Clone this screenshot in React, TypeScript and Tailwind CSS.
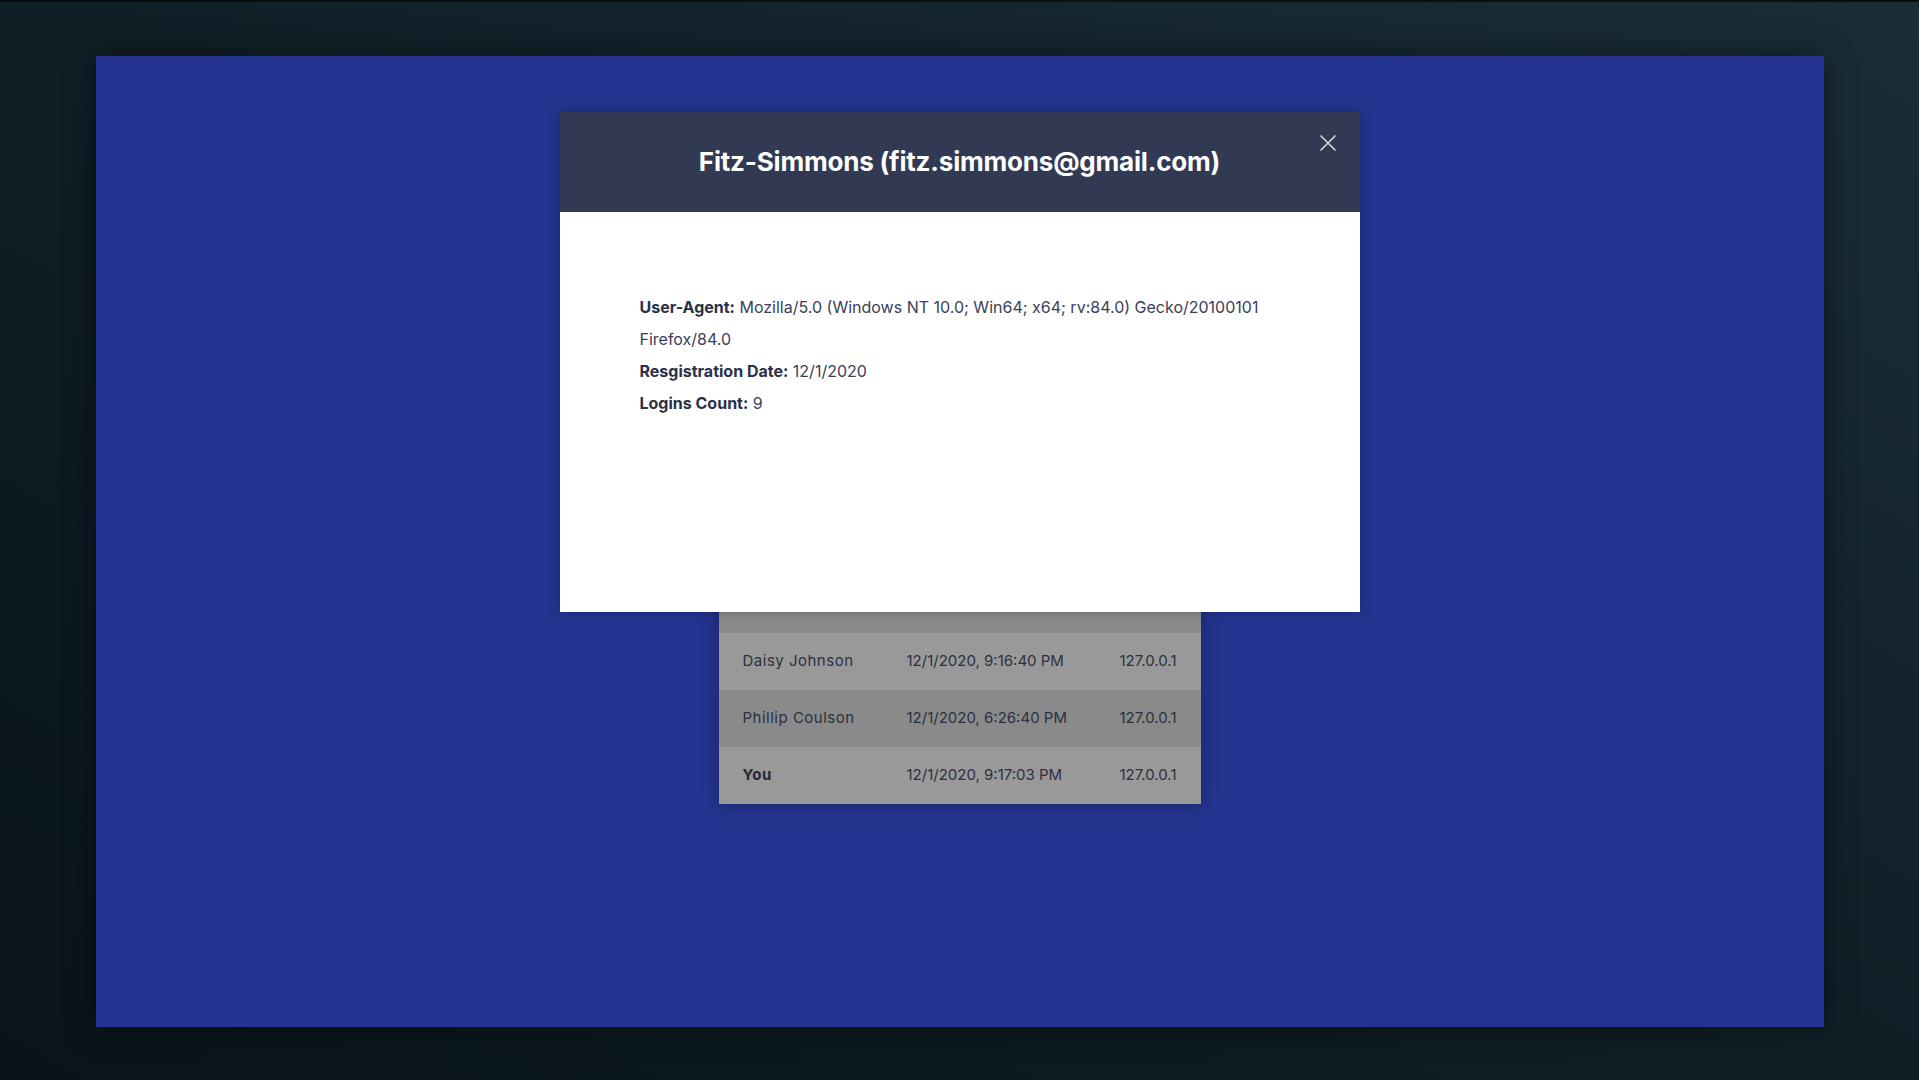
import React from "react";

const rows = [
  { name: "Leo Fitz", date: "12/1/2020, 8:02:11 PM", ip: "127.0.0.1", dark: false },
  { name: "Jemma Simmons", date: "12/1/2020, 7:45:20 PM", ip: "127.0.0.1", dark: true },
  { name: "Melinda May", date: "12/1/2020, 7:12:05 PM", ip: "127.0.0.1", dark: false },
  { name: "Fitz-Simmons", date: "12/1/2020, 9:14:52 PM", ip: "127.0.0.1", dark: true },
  { name: "Daisy Johnson", date: "12/1/2020, 9:16:40 PM", ip: "127.0.0.1", dark: false },
  { name: "Phillip Coulson", date: "12/1/2020, 6:26:40 PM", ip: "127.0.0.1", dark: true },
  { name: "You", date: "12/1/2020, 9:17:03 PM", ip: "127.0.0.1", dark: false, bold: true },
];

export default function App() {
  return (
    <div
      className="relative w-full h-[1080px] overflow-hidden flex items-center justify-center border-t-2 border-[#090e11] bg-[linear-gradient(30deg,#09141a_0%,#0f1d24_45%,#1a2e38_100%)]"
      style={{ fontFamily: "Inter, 'Noto Sans', sans-serif" }}
    >
      <div className="relative w-[1728px] h-[971px] bg-[#243490] shadow-[0_0_30px_rgba(0,0,0,0.45)] flex flex-col items-center">
        <div className="mt-[349px] w-[482px] flex flex-col shadow-[0_0_16px_rgba(0,0,0,0.3)]">
          {rows.map((r, i) => (
            <div
              key={i}
              className={`h-[57px] flex items-center px-6 text-[15px] text-[#2c3040] ${r.dark ? "bg-[#8a8a8a]" : "bg-[#999999]"}`}
            >
              <span className={`w-[164px] tracking-[0.5px] ${r.bold ? "font-bold text-[#1e2a36]" : ""}`}>{r.name}</span>
              <span className="flex-1">{r.date}</span>
              <span>{r.ip}</span>
            </div>
          ))}
        </div>

        <div className="absolute left-[464px] top-[56px] w-[800px] h-[500px] bg-white shadow-[0_0_12px_rgba(0,0,0,0.25)] flex flex-col">
          <div className="relative h-[100px] bg-[#313a52] flex items-center justify-center">
            <h2 className="text-white font-bold text-[26px] tracking-[-0.2px]">
              Fitz-Simmons (fitz.simmons@gmail.com)
            </h2>
            <button className="absolute right-[22px] top-[21px] w-[20px] h-[20px] flex items-center justify-center">
              <svg width="18" height="18" viewBox="0 0 18 18" fill="none" stroke="#d6d6d6" strokeWidth="1.6">
                <path d="M1.5 1.5 L16.5 16.5 M16.5 1.5 L1.5 16.5" />
              </svg>
            </button>
          </div>
          <div className="px-20 pt-[79px] text-[16px] leading-[32px] text-[#3a4058]">
            <p>
              <span className="font-bold text-[#2a3049]">User-Agent:</span>{" "}
              Mozilla/5.0 (Windows NT 10.0; Win64; x64; rv:84.0) Gecko/20100101 Firefox/84.0
            </p>
            <p>
              <span className="font-bold text-[#2a3049]">Resgistration Date:</span> 12/1/2020
            </p>
            <p>
              <span className="font-bold text-[#2a3049]">Logins Count:</span> 9
            </p>
          </div>
        </div>
      </div>
    </div>
  );
}
